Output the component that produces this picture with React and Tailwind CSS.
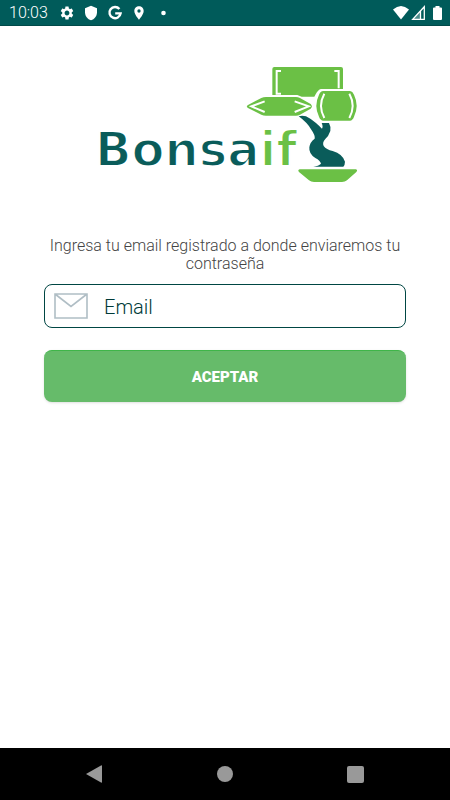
import React, { useState } from 'react';
import { MdSettings, MdShield, MdLocationOn } from 'react-icons/md';

function StatusBar() {
  return (
    <header className="h-[26px] flex items-center justify-between bg-[#005b5a] border-b border-[#004a49] pl-[9px] pr-2 text-white">
      <div className="flex items-center pt-px">
        <span className="w-[50px] text-base font-light leading-none">10:03</span>
        <div className="flex items-center gap-2">
          <MdSettings className="size-4" />
          <MdShield className="size-4" />
          <svg className="size-4" viewBox="0 0 16 16" fill="none" stroke="currentColor" strokeWidth="2.4">
            <path d="M12.4 4A5.6 5.6 0 1 0 13.6 8.4H8.2" />
          </svg>
          <MdLocationOn className="size-4" />
          <svg className="size-4" viewBox="0 0 16 16" fill="currentColor">
            <circle cx="8.500" cy="8" r="2.300" />
          </svg>
        </div>
      </div>
      <div className="flex items-center pt-px">
        <svg className="w-4 h-4" viewBox="0 0 16 16" fill="currentColor">
          <path d="M0 4.5Q8-2.5 16 4.5L8 14.5Z" />
        </svg>
        <svg className="w-4 h-4 ml-0.5" viewBox="0 0 16 16" fill="currentColor">
          <path d="M9 6V14.500H1.500Z" opacity=".3" />
          <path d="M13.300 1.700V14.300H1.700Z M9.500 5.500V14.300" fill="none" stroke="currentColor" strokeWidth="1.300" />
        </svg>
        <svg className="w-[9px] h-4 ml-1.5" viewBox="0 0 9 16" fill="currentColor">
          <path d="M2.500 1H6.500V2.500H8Q9 2.500 9 3.500V14Q9 15 8 15H1Q0 15 0 14V3.500Q0 2.500 1 2.500H2.500Z" />
        </svg>
      </div>
    </header>
  );
}

function Logo() {
  return (
    <svg
      className="w-[266px] h-[120px]"
      viewBox="0 0 266 120"
      role="img"
      aria-label="Bonsaif"
    >
      <text
        x="0"
        y="102"
        className="font-['DejaVu_Sans'] font-bold text-[48px] fill-[#0a5c5a] stroke-white stroke-2"
      >
        Bonsa<tspan className="fill-[#6bc045]">if</tspan>
      </text>
      <g transform="translate(125 -4) scale(.33333)">
        <g fill="#6bc045">
          <path d="M163 21H363Q369 21 369 27V87H303Q294 89 287 103L283 110H245L232 105H157V27Q157 21 163 21Z" />
          <path d="M84 135L124 114Q130 111 138 111H228Q234 111 240 114L272 132Q279 139 272 146L240 164Q234 167 228 167H138Q130 167 124 164L84 144Q77 139 84 135Z" />
          <path d="M310 93H390Q398 94 402 104Q418 137 402 170Q398 181 390 182H310Q301 181 297 170Q281 137 297 104Q301 94 310 93Z" />
          <path d="M239 328H408Q414 330 409 336L381 361Q375 366 366 366H282Q273 366 267 361L237 336Q232 330 239 328Z" />
        </g>
        <g fill="none" stroke="#fff" strokeWidth="6">
          <path d="M183 33H170V101H183M343 33H356V85" />
          <path d="M134 124L94 139L134 156M224 124L266 139L224 156" />
          <path d="M313 101Q293 137 313 174M388 101Q408 137 388 174" />
        </g>
        <path
          fill="#0a5c5a"
          d="M236 169Q246 165 258 169Q274 177 288 189Q298 198 306 206Q310 200 305 189H327Q334 202 331 213Q326 228 316 237Q306 248 311 258Q319 269 338 273Q368 282 375 305Q375 314 370 320H280Q296 318 303 311Q301 302 286 294Q266 282 268 262Q270 246 284 236Q286 226 273 208Q262 188 236 169Z"
        />
      </g>
    </svg>
  );
}

function NavBar() {
  return (
    <nav className="h-[52px] flex items-center justify-between bg-black px-[86px] text-[#999]">
      <button type="button" aria-label="Atrás">
        <svg className="w-4 h-[18px]" viewBox="0 0 16 18" fill="currentColor">
          <path d="M0 9L15 .500Q16 0 16 1V17Q16 18 15 17.500Z" />
        </svg>
      </button>
      <button type="button" aria-label="Inicio" className="size-4 rounded-full bg-[#999]" />
      <button type="button" aria-label="Recientes" className="size-[17px] rounded-xs bg-[#999]" />
    </nav>
  );
}

export default function App() {
  const [email, setEmail] = useState('');

  const handleSubmit = e => {
    e.preventDefault();
  };

  return (
    <div className="min-h-screen flex flex-col bg-white font-[Roboto,sans-serif]">
      <StatusBar />
      <main className="flex-1 flex flex-col px-11 pt-[38px]">
        <div className="flex justify-center pl-1.5">
          <Logo />
        </div>
        <form onSubmit={handleSubmit} className="flex flex-col pt-[53px]">
          <p className="text-center text-base font-light leading-[18px] text-[#444]">
            Ingresa tu email registrado a donde enviaremos tu contraseña
          </p>
          <label className="mt-[11px] h-11 flex items-center gap-4 rounded-lg border border-[#004643] pl-[9px] pr-3">
            <svg className="w-[34px] h-[26px] shrink-0" viewBox="0 0 34 26" fill="none" stroke="#b0bec5" strokeWidth="1.600">
              <path d="M1 1H33V25H1ZM1 1L17 13.500L33 1" />
            </svg>
            <input
              type="email"
              name="email"
              aria-label="Email"
              placeholder="Email"
              value={email}
              onChange={e => setEmail(e.target.value)}
              className="w-full pt-0.5 text-xl font-light text-[#004643] placeholder-[#003a38] focus:outline-none"
            />
          </label>
          <button
            type="submit"
            className="mt-[22px] h-[52px] rounded-lg border-t border-[#3fb549] bg-[#66bb6a] pt-0.5 text-[15px] font-black text-white shadow-sm"
          >
            ACEPTAR
          </button>
        </form>
      </main>
      <NavBar />
    </div>
  );
}
